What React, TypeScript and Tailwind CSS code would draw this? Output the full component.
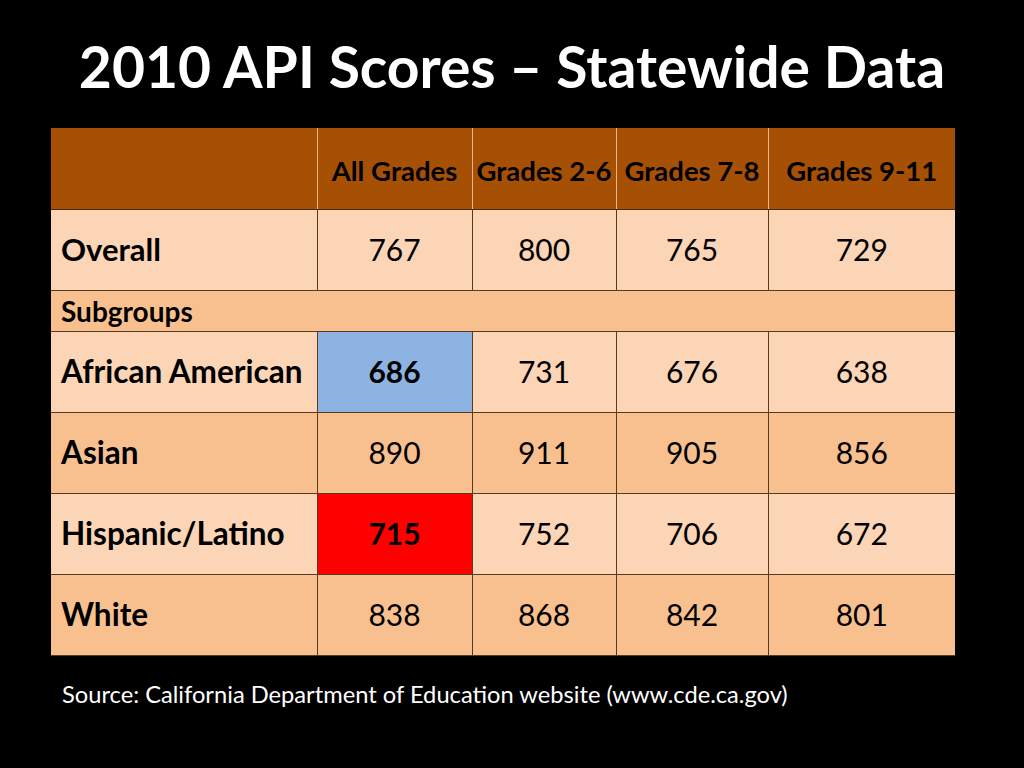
const font = { fontFamily: 'Lato, "Open Sans", sans-serif' }

interface Row {
  label: string
  values: string[]
  tone: 'light' | 'dark'
}

const rows: Row[] = [
  { label: 'African American', values: ['686', '731', '676', '638'], tone: 'light' },
  { label: 'Asian', values: ['890', '911', '905', '856'], tone: 'dark' },
  { label: 'Hispanic/Latino', values: ['715', '752', '706', '672'], tone: 'light' },
  { label: 'White', values: ['838', '868', '842', '801'], tone: 'dark' },
]

const headers = ['All Grades', 'Grades 2-6', 'Grades 7-8', 'Grades 9-11']

function cellBg(row: number, col: number, tone: 'light' | 'dark') {
  if (row === 0 && col === 0) return 'bg-[#8db3e2] font-bold'
  if (row === 2 && col === 0) return 'bg-[#ff0000] font-bold'
  return tone === 'light' ? 'bg-[#fbd5b6]' : 'bg-[#f9c08f]'
}

export default function App() {
  return (
    <div className="h-[768px] w-[1024px] overflow-hidden bg-black" style={font}>
      <div className="flex h-[128px] items-center justify-center pt-1">
        <h1 className="text-[57px] leading-none font-bold text-white">
          2010 API Scores – Statewide Data
        </h1>
      </div>

      <table className="ml-[51px] w-[904px] table-fixed border-collapse text-black">
        <colgroup>
          <col className="w-[266px]" />
          <col className="w-[155px]" />
          <col className="w-[144px]" />
          <col className="w-[152px]" />
          <col className="w-[187px]" />
        </colgroup>
        <thead>
          <tr className="h-[81px] bg-[#a65005]">
            <th className="border-b border-[#4a2a10]" />
            {headers.map((h) => (
              <th
                key={h}
                className="whitespace-nowrap border-b border-l border-b-[#4a2a10] border-l-[#e8b48a] pt-1 text-center text-[27.5px] font-bold"
              >
                {h}
              </th>
            ))}
          </tr>
        </thead>
        <tbody>
          <tr className="h-[81px] bg-[#fbd5b6]">
            <td className="border-b border-[#5a3a1e] pl-[10px] text-[31px] font-bold">Overall</td>
            {['767', '800', '765', '729'].map((v) => (
              <td key={v} className="border-b border-l border-[#5a3a1e] text-center text-[30px]">
                {v}
              </td>
            ))}
          </tr>
          <tr className="h-[41px] bg-[#f9c08f]">
            <td colSpan={5} className="border-b border-[#5a3a1e] pl-[10px] text-[28px] leading-none font-bold">
              Subgroups
            </td>
          </tr>
          {rows.map((r, ri) => (
            <tr key={r.label} className="h-[81px]">
              <td
                className={`border-b border-[#5a3a1e] pl-[10px] text-[31.5px] font-bold whitespace-nowrap ${
                  r.tone === 'light' ? 'bg-[#fbd5b6]' : 'bg-[#f9c08f]'
                }`}
              >
                {r.label}
              </td>
              {r.values.map((v, ci) => (
                <td
                  key={ci}
                  className={`border-b border-l border-[#5a3a1e] text-center text-[30px] ${cellBg(ri, ci, r.tone)}`}
                >
                  {v}
                </td>
              ))}
            </tr>
          ))}
        </tbody>
      </table>

      <p className="mt-[21px] pl-[62px] text-[23.7px] text-white">
        Source: California Department of Education website (www.cde.ca.gov)
      </p>
    </div>
  )
}
